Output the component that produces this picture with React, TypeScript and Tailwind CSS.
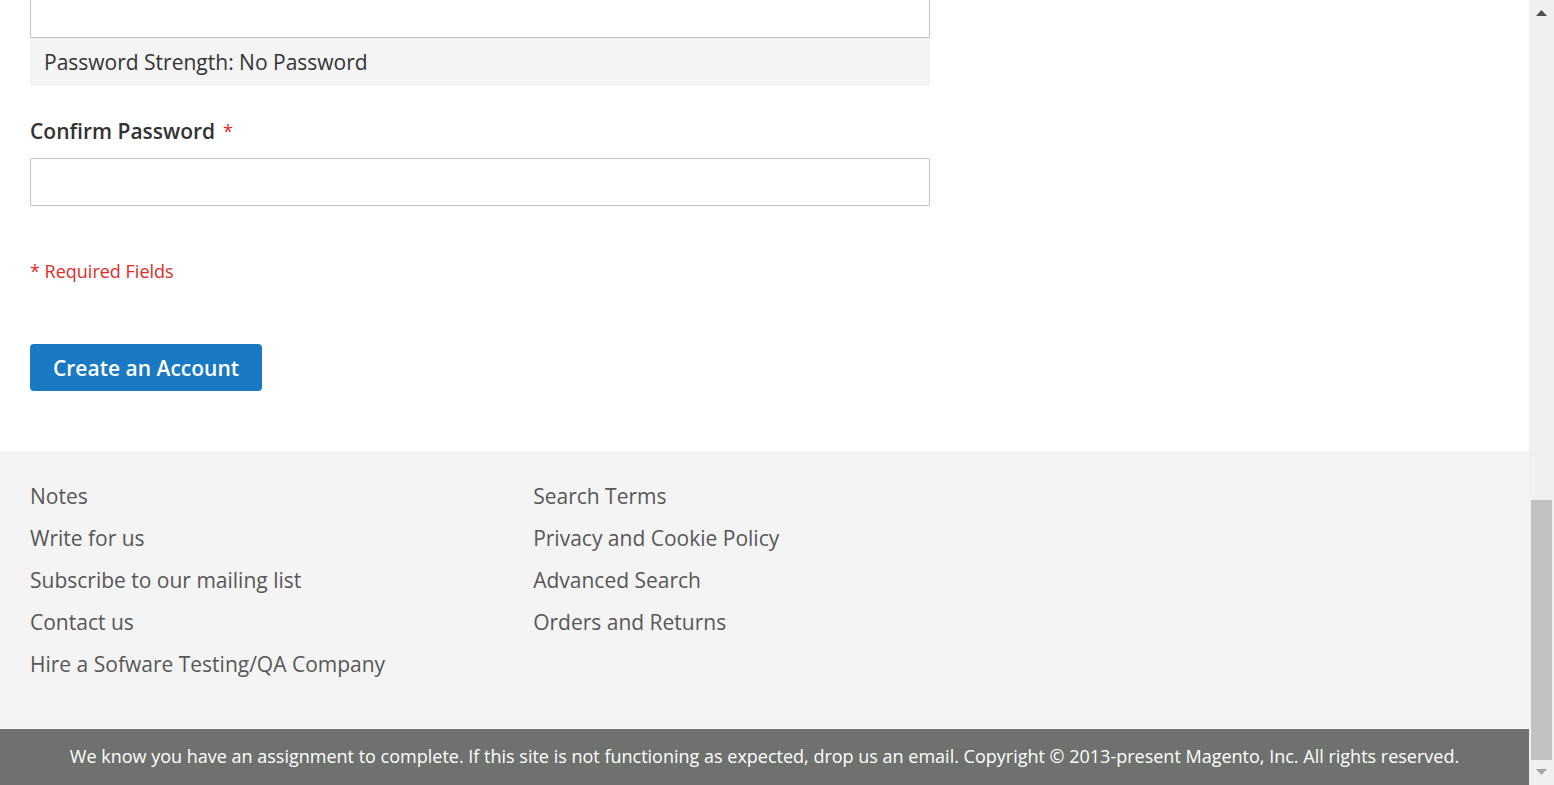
const primaryLinks = [
  'Notes',
  'Write for us',
  'Subscribe to our mailing list',
  'Contact us',
  'Hire a Sofware Testing/QA Company',
];

const secondaryLinks = [
  'Search Terms',
  'Privacy and Cookie Policy',
  'Advanced Search',
  'Orders and Returns',
];

function LinkList({ links }: { links: string[] }) {
  return (
    <ul className="flex flex-col gap-3">
      {links.map((label) => (
        <li key={label}>
          <a href="#" className="block text-[#575757] hover:underline">
            {label}
          </a>
        </li>
      ))}
    </ul>
  );
}

function AccountForm() {
  return (
    <form className="px-[30px] pb-[60px]" onSubmit={(event) => event.preventDefault()}>
      <div className="max-w-[900px]">
        <input
          type="password"
          aria-label="Password"
          className="block h-[38px] w-full rounded-b-[1px] border border-t-0 border-[#c2c2c2] bg-white px-3 outline-none"
        />
        <div className="bg-[#f4f4f4] px-[14px] py-[9px]" aria-live="polite">
          Password Strength: No Password
        </div>

        <label htmlFor="confirm-password" className="mt-[30px] flex items-center gap-2 font-semibold">
          Confirm Password
          <span className="text-lg font-normal text-[#e02b27]">*</span>
        </label>
        <input
          id="confirm-password"
          type="password"
          required
          className="mt-3 block h-12 w-full rounded-[1px] border border-[#c2c2c2] bg-white px-3 outline-none"
        />
      </div>

      <p className="mt-[50px] text-lg leading-[30px] text-[#e02b27]">* Required Fields</p>

      <button
        type="submit"
        className="mt-[58px] block rounded-[4px] bg-[#1979c3] px-[23px] pt-[9px] pb-2 font-semibold text-white"
      >
        Create an Account
      </button>
    </form>
  );
}

function ScrollRail() {
  return (
    <div className="flex w-[25px] shrink-0 flex-col items-center bg-[#f0f0f0]" aria-hidden="true">
      <svg className="h-[25px] w-[25px] shrink-0" viewBox="0 0 25 25">
        <path d="M7 16L12.5 10L18 16Z" fill="#505050" />
      </svg>
      <div className="grow-[475]" />
      <div className="w-[21px] grow-[260] bg-[#c1c1c1]" />
      <svg className="h-[25px] w-[25px] shrink-0" viewBox="0 0 25 25">
        <path d="M7 9L12.5 15L18 9Z" fill="#a3a3a3" />
      </svg>
    </div>
  );
}

export default function App() {
  return (
    <div className="flex min-h-screen bg-white font-['Open_Sans','Noto_Sans',sans-serif] text-[21px] leading-[30px] text-[#333333]">
      <div className="flex min-w-0 flex-1 flex-col">
        <main>
          <AccountForm />
        </main>
        <footer className="flex flex-1 flex-col">
          <nav className="flex flex-1 flex-wrap gap-x-[148px] bg-[#f4f4f4] px-[30px] pt-[30px] pb-[50px]">
            <LinkList links={primaryLinks} />
            <LinkList links={secondaryLinks} />
          </nav>
          <small className="block bg-[#6e716e] px-[30px] pt-3 pb-[14px] text-center text-lg leading-[30px] text-white">
            We know you have an assignment to complete. If this site is not functioning as expected, drop us an
            email. Copyright © 2013-present Magento, Inc. All rights reserved.
          </small>
        </footer>
      </div>
      <ScrollRail />
    </div>
  );
}
